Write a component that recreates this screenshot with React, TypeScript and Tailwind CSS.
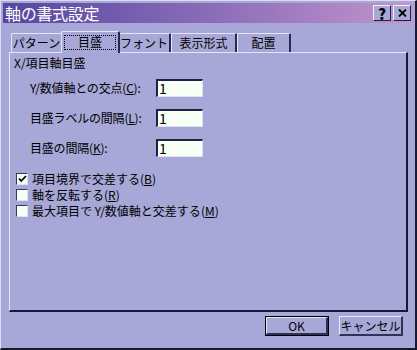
import React from "react";

const font = { fontFamily: '"Noto Sans CJK JP", "Noto Sans", sans-serif' };

// 下線付きのアクセスキー
const Key: React.FC<{ k: string }> = ({ k }) => (
  <span>
    (<span className="underline underline-offset-[1px]">{k}</span>)
  </span>
);

interface TabProps {
  label: string;
  width: string;
  active?: boolean;
}

const Tab: React.FC<TabProps> = ({ label, width, active }) => (
  <div
    className={`${width} ${
      active ? "h-[22px] -mx-[2px] z-10 -mb-[1px]" : "h-[19px]"
    } relative bg-[#a8a8d8] border-l border-t border-r-2 border-l-[#e4e4fa] border-t-[#e4e4fa] border-r-[#282850] rounded-t-[2px] flex items-center justify-center text-[12px] text-black`}
  >
    {active ? (
      <span className="border border-dotted border-black px-[13px] leading-[12px] pb-[1px]">{label}</span>
    ) : (
      <span className="leading-none">{label}</span>
    )}
  </div>
);

const Field: React.FC<{ label: React.ReactNode }> = ({ label }) => (
  <div className="flex items-center h-[18px]">
    <div className="w-[142px] shrink-0 pl-[16px] text-[12px] whitespace-nowrap tracking-[-0.2px]">{label}</div>
    <div className="w-[47px] shrink-0 h-[18px] bg-[#f8fff4] border-l-2 border-t-2 border-l-[#202040] border-t-[#202040] border-r border-b border-r-[#e0e0f8] border-b-[#e0e0f8] text-[14px] leading-[14px] pl-[1px]">
      1
    </div>
  </div>
);

const Check: React.FC<{ checked?: boolean; children: React.ReactNode }> = ({ checked, children }) => (
  <div className="flex items-center h-[16px] text-[12px]">
    <div className="w-[12px] h-[12px] bg-[#f8fff4] border-l border-t border-l-[#383860] border-t-[#383860] border-r border-b border-r-[#e0e0f8] border-b-[#e0e0f8] flex items-center justify-center">
      {checked && (
        <svg width="9" height="8" viewBox="0 0 9 8">
          <path d="M1 3.5 L3.2 6 L8 1" stroke="black" strokeWidth="1.8" fill="none" />
        </svg>
      )}
    </div>
    <div className="ml-[4px] whitespace-nowrap">{children}</div>
  </div>
);

const Button: React.FC<{ children: React.ReactNode; def?: boolean; width: string }> = ({ children, def, width }) => (
  <div className={`${width} h-[20px] ${def ? "border border-black" : ""}`}>
    <div className="w-full h-full bg-[#a8a8d8] border-l border-t border-l-[#e8e8fc] border-t-[#e8e8fc] border-r-2 border-b-2 border-r-[#303058] border-b-[#303058] flex items-center justify-center text-[12px]">
      {children}
    </div>
  </div>
);

export default function App() {
  return (
    <div
      style={font}
      className="w-[417px] h-[350px] bg-[#a8a8d8] border-l border-t border-l-[#dcdcf4] border-t-[#dcdcf4] border-r-2 border-b-2 border-r-[#181830] border-b-[#181830] p-[2px] flex flex-col text-black"
    >
      {/* タイトルバー */}
      <div className="h-[20px] bg-gradient-to-r from-[#5646a0] via-[#8a6cb8] to-[#c494cc] flex items-center pl-[2px] pr-[2px]">
        <span className="text-white text-[16px] leading-none tracking-[-0.3px]">軸の書式設定</span>
        <div className="ml-auto flex gap-[2px]">
          <div className="w-[18px] h-[16px] bg-[#a8a8d8] border-l border-t border-l-[#eeeefc] border-t-[#eeeefc] border-r border-b border-r-[#202040] border-b-[#202040] flex items-center justify-center text-[15px] font-black leading-none">
            ?
          </div>
          <div className="w-[18px] h-[16px] bg-[#a8a8d8] border-l border-t border-l-[#eeeefc] border-t-[#eeeefc] border-r border-b border-r-[#202040] border-b-[#202040] flex items-center justify-center">
            <svg width="9" height="8" viewBox="0 0 9 8">
              <path d="M1 0.5 L8 7.5 M8 0.5 L1 7.5" stroke="black" strokeWidth="1.8" />
            </svg>
          </div>
        </div>
      </div>

      {/* タブ */}
      <div className="mt-[7px] ml-[6px] h-[22px] flex items-end pl-[2px]">
        <Tab label="パターン" width="w-[52px]" />
        <Tab label="目盛" width="w-[59px]" active />
        <Tab label="フォント" width="w-[53px]" />
        <Tab label="表示形式" width="w-[66px]" />
        <Tab label="配置" width="w-[54px]" />
      </div>

      {/* パネル */}
      <div className="ml-[6px] w-[399px] h-[260px] border-l border-t border-l-[#e4e4fa] border-t-[#e4e4fa] border-r-2 border-b-2 border-r-[#181838] border-b-[#181838] flex flex-col pl-[4px] pt-[3px] text-[12px]">
        <div className="leading-[14px]">X/項目軸目盛</div>

        <div className="flex flex-col gap-[12px] mt-[9px]">
          <Field label={<>Y/数値軸との交点<Key k="C" />:</>} />
          <Field label={<>目盛ラベルの間隔<Key k="L" />:</>} />
          <Field label={<>目盛の間隔<Key k="K" />:</>} />
        </div>

        <div className="flex flex-col mt-[14px] pl-[2px]">
          <Check checked>
            項目境界で交差する<Key k="B" />
          </Check>
          <Check>
            軸を反転する<Key k="R" />
          </Check>
          <Check>
            最大項目で Y/数値軸と交差する<Key k="M" />
          </Check>
        </div>
      </div>

      {/* ボタン */}
      <div className="flex justify-end gap-[10px] mt-[4px] pr-[10px]">
        <Button def width="w-[64px]">OK</Button>
        <Button width="w-[64px]">キャンセル</Button>
      </div>
    </div>
  );
}
